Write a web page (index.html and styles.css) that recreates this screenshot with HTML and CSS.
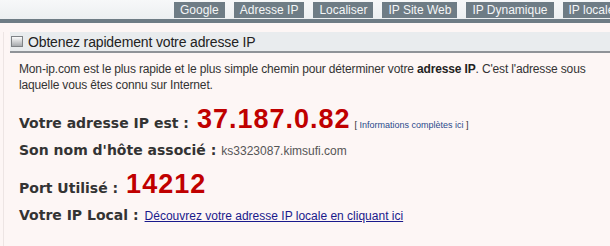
FILE: index.html
```html
<!DOCTYPE html>
<html lang="fr">
<head>
    <meta charset="UTF-8">
    <title>Mon IP</title>
    <link rel="stylesheet" href="styles.css">
</head>
<body>
    <div class="topbar">
        <nav class="tabs">
            <a href="#" class="tab">Google</a>
            <a href="#" class="tab">Adresse IP</a>
            <a href="#" class="tab">Localiser</a>
            <a href="#" class="tab">IP Site Web</a>
            <a href="#" class="tab">IP Dynamique</a>
            <a href="#" class="tab">IP locale</a>
        </nav>
    </div>

    <div class="page">
        <div class="box">
            <h2 class="box-title"><span class="box-icon"></span>Obtenez rapidement votre adresse IP</h2>
            <p class="intro">Mon-ip.com est le plus rapide et le plus simple chemin pour déterminer votre <strong>adresse IP</strong>. C'est l'adresse sous laquelle vous êtes connu sur Internet.</p>

            <div class="row row-ip">
                <span class="label">Votre adresse IP est :</span>
                <span class="big">37.187.0.82</span>
                <span class="more">[ <a href="#">Informations complètes ici</a> ]</span>
            </div>
            <div class="row row-host">
                <span class="label">Son nom d'hôte associé :</span>
                <span class="value">ks3323087.kimsufi.com</span>
            </div>
            <div class="row row-port">
                <span class="label">Port Utilisé :</span>
                <span class="big">14212</span>
            </div>
            <div class="row row-local">
                <span class="label">Votre IP Local :</span>
                <a href="#" class="local-link">Découvrez votre adresse IP locale en cliquant ici</a>
            </div>
        </div>
    </div>
</body>
</html>
```

FILE: styles.css
```css
* {
    margin: 0;
    padding: 0;
    box-sizing: border-box;
}

body {
    font-family: 'Liberation Sans', Arial, sans-serif;
    font-size: 12px;
    color: #333;
    background-color: #fdf6f5;
    width: 610px;
    height: 246px;
    overflow: hidden;
}

/* barre du haut */
.topbar {
    background: linear-gradient(to bottom, #f7f8f9, #eceff1);
    border-bottom: 4px solid #6e7c85;
    padding: 2px 0 1px;
    overflow: hidden;
}

.tabs {
    display: flex;
    gap: 9px;
    padding-left: 174px;
    white-space: nowrap;
}

.tab {
    display: block;
    background-color: #6e7c85;
    color: #f4f6f7;
    text-decoration: none;
    font-size: 12px;
    line-height: 16px;
    padding: 0 6px;
    flex-shrink: 0;
}

/* contenu */
.page {
    padding: 9px 0 0 3px;
    height: 223px;
}

.box {
    border-left: 1px solid #ede5e4;
    height: 100%;
    padding-left: 6px;
}

.box-title {
    display: flex;
    align-items: center;
    gap: 5px;
    background-color: #e9ecee;
    border-bottom: 2px solid #8f9398;
    font-size: 14px;
    font-weight: normal;
    color: #222;
    height: 21px;
    padding-left: 1px;
    letter-spacing: -0.15px;
}

.box-icon {
    width: 12px;
    height: 11px;
    border: 1px solid #7e8286;
    background: linear-gradient(to bottom, #fbfbfb, #a6aaae);
}

.intro {
    padding: 8px 4px 0 9px;
    line-height: 16px;
    letter-spacing: -0.15px;
    color: #333;
}

.intro strong {
    color: #222;
}

.row {
    display: flex;
    align-items: baseline;
    padding-left: 9px;
}

.label {
    font-family: 'DejaVu Sans', Verdana, sans-serif;
    font-weight: bold;
    font-size: 14px;
    line-height: 18px;
    color: #333;
}

.big {
    font-family: 'Liberation Sans', Arial, sans-serif;
    font-weight: bold;
    font-size: 27px;
    line-height: 28px;
    letter-spacing: 1px;
    color: #c00000;
    margin-left: 8px;
}

.more {
    font-size: 9px;
    color: #333;
    margin-left: 4px;
}

.more a {
    color: #2a4a8c;
    text-decoration: none;
}

.value {
    font-size: 12px;
    color: #555;
    margin-left: 5px;
}

.row-ip {
    margin-top: 12px;
}

.row-host {
    margin-top: 8px;
}

.row-port {
    margin-top: 11px;
}

.row-local {
    margin-top: 8px;
}

.local-link {
    font-size: 12px;
    color: #1a1a8c;
    margin-left: 6px;
}
```
